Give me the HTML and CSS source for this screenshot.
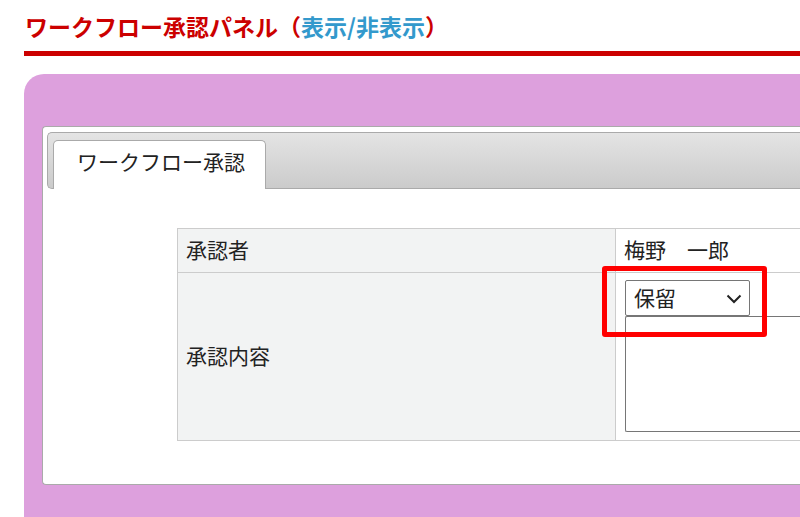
FILE: index.html
```html
<!DOCTYPE html>
<html lang="ja">
<head>
<meta charset="utf-8">
<title>ワークフロー承認パネル</title>
<link rel="stylesheet" href="styles.css">
</head>
<body>
<div class="page">
  <header class="head">
    <h1 class="title">ワークフロー承認パネル（<a class="toggle" href="#">表示/非表示</a>）</h1>
  </header>
  <section class="plum">
    <div class="panel">
      <div class="tabbar">
        <div class="tab">ワークフロー承認</div>
      </div>
      <table class="grid">
        <tr>
          <th class="label row1">承認者</th>
          <td class="val row1">梅野　一郎</td>
        </tr>
        <tr>
          <th class="label row2">承認内容</th>
          <td class="val row2 editcell">
            <div class="selectwrap">
              <div class="select">保留</div>
              <svg class="chev" width="16" height="10" viewBox="0 0 16 10"><path d="M1.5 1.5 L8 8 L14.5 1.5" fill="none" stroke="#222" stroke-width="2"/></svg>
            </div>
            <div class="textarea"></div>
            <div class="highlight"></div>
          </td>
        </tr>
      </table>
    </div>
  </section>
</div>
</body>
</html>
```
FILE: styles.css
```css
html, body {
  margin: 0;
  padding: 0;
  background: #fff;
  overflow: hidden;
}
body {
  font-family: "Noto Sans CJK JP", "Noto Sans", sans-serif;
  color: #222;
}
.page {
  width: 1400px;
  padding-left: 24px;
}
.head {
  padding-top: 11px;
  padding-bottom: 10px;
  border-bottom: 5px solid #cc0000;
}
.title {
  margin: 0;
  padding-left: 1px;
  font-size: 23px;
  line-height: 30px;
  font-weight: bold;
  color: #cc0000;
  letter-spacing: 0;
}
.toggle {
  color: #3399cc;
  text-decoration: none;
}
.plum {
  margin-top: 18px;
  background: #dda0dd;
  border-top-left-radius: 20px;
  padding: 52px 0 80px 18px;
}
.panel {
  background: #fff;
  border: 1px solid #aaa;
  border-right: 0;
  border-radius: 4px 0 0 4px;
  padding: 5px 0 43px 4px;
}
.tabbar {
  display: flex;
  align-items: flex-end;
  height: 55px;
  box-sizing: content-box;
  padding: 0 0 0 5px;
  border: 1px solid #aaa;
  border-right: 0;
  border-radius: 5px 0 0 5px;
  background: linear-gradient(#e4e4e4, #cbcbcb);
}
.tab {
  box-sizing: border-box;
  height: 49px;
  margin-bottom: -1px;
  width: 213px;
  border: 1px solid #aaa;
  border-bottom: 0;
  border-radius: 5px 5px 0 0;
  background: #fff;
  font-size: 21px;
  line-height: 41px;
  padding-left: 23px;
  color: #222;
}
.grid {
  margin-top: 39px;
  margin-left: 130px;
  border-collapse: collapse;
}
.grid th, .grid td {
  border: 1px solid #ccc;
  font-size: 21px;
  line-height: 28px;
  font-weight: normal;
  text-align: left;
  color: #222;
}
.label {
  background: #f2f3f3;
  width: 419px;
  padding: 0 10px 4px 8px;
}
.val {
  width: 500px;
  padding: 0 10px 4px 8px;
}
.row1 {
  height: 39px;
}
.row2 {
  height: 148px;
}
.editcell {
  position: relative;
  vertical-align: top;
  padding: 7px 10px 8px 9px;
}
.selectwrap {
  position: relative;
  width: 125px;
}
.select {
  box-sizing: border-box;
  height: 36px;
  border: 1px solid #767676;
  border-radius: 2px;
  padding-left: 8px;
  line-height: 33px;
  font-size: 21px;
  background: #fff;
}
.chev {
  position: absolute;
  left: 101px;
  top: 14px;
}
.textarea {
  box-sizing: border-box;
  height: 116px;
  border: 1px solid #767676;
  border-right: 0;
  border-radius: 2px 0 0 2px;
  background: #fff;
}
.highlight {
  position: absolute;
  left: -14px;
  top: -7px;
  width: 165px;
  height: 71px;
  box-sizing: border-box;
  border: 5px solid #ff0000;
  border-radius: 3px;
}
```
